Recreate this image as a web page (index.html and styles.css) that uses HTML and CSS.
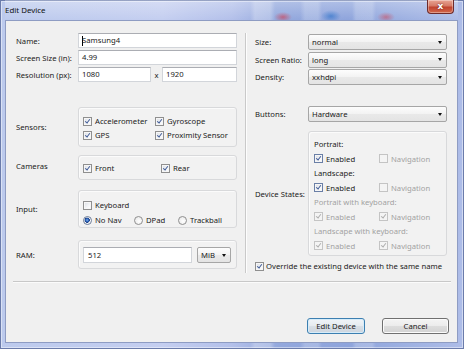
FILE: index.html
```html
<!DOCTYPE html>
<html>
<head>
<meta charset="utf-8">
<link rel="stylesheet" href="styles.css">
</head>
<body>
<div class="window">
  <div class="titlebar">
    <span class="title">Edit Device</span>
    <span class="close">x</span>
  </div>
  <div class="client">
    <div class="main">
      <div class="col-left">
        <div class="row">
          <span class="lbl">Name:</span>
          <div class="input fill"><span class="caret"></span>Samsung4</div>
        </div>
        <div class="row">
          <span class="lbl">Screen Size (in):</span>
          <div class="input fill">4.99</div>
        </div>
        <div class="row">
          <span class="lbl">Resolution (px):</span>
          <div class="input res1">1080</div>
          <span class="times">x</span>
          <div class="input fill">1920</div>
        </div>

        <div class="grow sensors-row">
          <span class="lbl">Sensors:</span>
          <div class="group sensors">
            <div class="cbline">
              <span class="item c72"><span class="cb on"></span>Accelerometer</span>
              <span class="item"><span class="cb on"></span>Gyroscope</span>
            </div>
            <div class="cbline">
              <span class="item c72"><span class="cb on"></span>GPS</span>
              <span class="item"><span class="cb on"></span>Proximity Sensor</span>
            </div>
          </div>
        </div>

        <div class="grow cameras-row">
          <span class="lbl up">Cameras</span>
          <div class="group cameras">
            <div class="cbline">
              <span class="item c78"><span class="cb on"></span>Front</span>
              <span class="item"><span class="cb on"></span>Rear</span>
            </div>
          </div>
        </div>

        <div class="grow input-row">
          <span class="lbl">Input:</span>
          <div class="group inputs">
            <div class="cbline">
              <span class="item"><span class="cb"></span>Keyboard</span>
            </div>
            <div class="cbline">
              <span class="item c51"><span class="rb on"></span>No Nav</span>
              <span class="item c44"><span class="rb"></span>DPad</span>
              <span class="item"><span class="rb"></span>Trackball</span>
            </div>
          </div>
        </div>

        <div class="grow ram-row">
          <span class="lbl">RAM:</span>
          <div class="group ram">
            <div class="input ramval">512</div>
            <div class="combo mib"><span>MiB</span><span class="arrow"></span></div>
          </div>
        </div>
      </div>

      <div class="vdivider"></div>

      <div class="col-right">
        <div class="rrow first">
          <span class="rlbl">Size:</span>
          <div class="combo fill"><span>normal</span><span class="arrow"></span></div>
        </div>
        <div class="rrow">
          <span class="rlbl">Screen Ratio:</span>
          <div class="combo fill"><span>long</span><span class="arrow"></span></div>
        </div>
        <div class="rrow">
          <span class="rlbl">Density:</span>
          <div class="combo fill"><span>xxhdpi</span><span class="arrow"></span></div>
        </div>
        <div class="rrow buttons-row">
          <span class="rlbl">Buttons:</span>
          <div class="combo fill"><span>Hardware</span><span class="arrow"></span></div>
        </div>

        <div class="states-row">
          <span class="rlbl">Device States:</span>
          <div class="group states">
            <div class="slabel">Portrait:</div>
            <div class="sline">
              <span class="item c65"><span class="cb on focus"></span>Enabled</span>
              <span class="item dis"><span class="cb dis"></span>Navigation</span>
            </div>
            <div class="slabel">Landscape:</div>
            <div class="sline">
              <span class="item c65"><span class="cb on focus"></span>Enabled</span>
              <span class="item dis"><span class="cb dis"></span>Navigation</span>
            </div>
            <div class="slabel dis">Portrait with keyboard:</div>
            <div class="sline">
              <span class="item c65 dis"><span class="cb dis on"></span>Enabled</span>
              <span class="item dis"><span class="cb dis on"></span>Navigation</span>
            </div>
            <div class="slabel dis">Landscape with keyboard:</div>
            <div class="sline">
              <span class="item c65 dis"><span class="cb dis on"></span>Enabled</span>
              <span class="item dis"><span class="cb dis on"></span>Navigation</span>
            </div>
          </div>
        </div>

        <div class="override">
          <span class="item"><span class="cb on"></span>Override the existing device with the same name</span>
        </div>
      </div>
    </div>

    <div class="separator"></div>

    <div class="actions">
      <button class="btn default">Edit Device</button>
      <button class="btn cancel">Cancel</button>
    </div>
  </div>
</div>
</body>
</html>
```

FILE: styles.css
```css
html, body {
  margin: 0;
  padding: 0;
}
body {
  width: 464px;
  height: 349px;
  overflow: hidden;
  font-family: "Noto Sans", "Open Sans", sans-serif;
  font-size: 7.7px;
  color: #1b1b1b;
}

.window {
  width: 464px;
  height: 349px;
  box-sizing: border-box;
  padding: 0 6px 6px 5px;
  display: flex;
  flex-direction: column;
  background:
    radial-gradient(ellipse 9px 5px at 283px 17px, rgba(196, 70, 96, 0.75), rgba(196, 70, 96, 0) 100%),
    radial-gradient(ellipse 10px 6px at 331px 16px, rgba(40, 110, 200, 0.7), rgba(40, 110, 200, 0) 100%),
    radial-gradient(ellipse 9px 5px at 386px 17px, rgba(200, 70, 90, 0.6), rgba(200, 70, 90, 0) 100%),
    linear-gradient(90deg, rgba(255,255,255,0) 0, rgba(255,255,255,0) 250px, rgba(255,255,255,0.25) 255px, rgba(255,255,255,0.25) 270px, rgba(255,255,255,0) 275px, rgba(255,255,255,0) 300px, rgba(255,255,255,0.2) 305px, rgba(255,255,255,0.2) 318px, rgba(255,255,255,0) 322px, rgba(255,255,255,0) 352px, rgba(255,255,255,0.2) 356px, rgba(255,255,255,0.2) 372px, rgba(255,255,255,0) 376px),
    linear-gradient(90deg, #bccaed 0%, #c4cef0 35%, #b3c0ea 50%, #93a8dd 60%, #8ea4dc 75%, #9eb1e2 88%, #aebde8 100%);
  box-shadow: inset 0 0 0 1px #6b7cab, inset 0 0 0 2px rgba(255,255,255,0.45);
}

.titlebar {
  height: 20px;
  flex: none;
  display: flex;
  align-items: flex-start;
  justify-content: space-between;
  background: linear-gradient(rgba(255,255,255,0.3), rgba(255,255,255,0));
}
.title {
  margin-top: 5px;
  font-size: 7.9px;
  line-height: 10px;
  color: #111;
}
.close {
  width: 27px;
  height: 14px;
  margin-right: 4px;
  box-sizing: border-box;
  border: 1px solid #6e2a2a;
  border-top: none;
  border-radius: 0 0 4px 4px;
  background: linear-gradient(#e8a493 0%, #d67a66 45%, #c0432e 55%, #d2674c 100%);
  color: #fff;
  font-family: "DejaVu Sans", sans-serif;
  font-weight: bold;
  font-size: 9px;
  line-height: 12px;
  text-align: center;
  text-shadow: 0 0 2px #5a1a10;
  box-shadow: inset 0 0 0 1px rgba(255,255,255,0.35);
}

.client {
  flex: 1;
  background: #f0f0f0;
  border: 1px solid #8e9cc3;
  display: flex;
  flex-direction: column;
}

.main {
  display: flex;
  padding: 12px 10px 0 10px;
}

.col-left {
  width: 221px;
  display: flex;
  flex-direction: column;
}
.vdivider {
  width: 1px;
  height: 240px;
  margin: 0 9px 0 8px;
  background: #c9c9c9;
  box-shadow: 1px 0 0 #fdfdfd;
}
.col-right {
  width: 192px;
  display: flex;
  flex-direction: column;
}

.row {
  display: flex;
  align-items: center;
  height: 15px;
  margin-bottom: 2px;
}
.lbl {
  width: 62px;
  flex: none;
  white-space: nowrap;
}
.lbl.up {
  margin-top: -3px;
}
.input {
  height: 15px;
  box-sizing: border-box;
  background: #fff;
  border: 1px solid #d2d5da;
  border-top-color: #abadb3;
  padding-left: 3px;
  line-height: 13px;
  display: flex;
  align-items: center;
  white-space: nowrap;
}
.fill {
  flex: 1;
}
.res1 {
  width: 73px;
}
.times {
  width: 11px;
  text-align: center;
  flex: none;
}
.caret {
  display: inline-block;
  width: 0;
  height: 10px;
  border-left: 1px solid #000;
  margin-right: -1px;
}

.grow {
  display: flex;
  align-items: center;
}
.group {
  flex: 1;
  box-sizing: border-box;
  border: 1px solid #d8d9db;
  border-radius: 3px;
  background: #f2f2f2;
  box-shadow: inset 1px 1px 0 #fbfbfb;
  padding-left: 4px;
}
.sensors-row { margin-top: 23px; }
.sensors {
  height: 40px;
  padding-top: 6px;
}
.cameras-row { margin-top: 8px; }
.cameras {
  height: 25px;
  padding-top: 5px;
}
.input-row { margin-top: 10px; }
.inputs {
  height: 38px;
  padding-top: 7px;
}
.inputs .cbline + .cbline { margin-top: 1px; }
.ram-row { margin-top: 12px; }
.ram {
  height: 29px;
  display: flex;
  align-items: center;
  padding-top: 1px;
}
.ramval {
  width: 109px;
  height: 16px;
  padding-left: 4px;
}
.mib {
  width: 34px;
  height: 17px;
  margin-left: 5px;
  background: linear-gradient(#f6f6f6 0%, #ebebeb 48%, #dcdcdc 52%, #d3d3d3 100%);
  border-color: #8a8a8a;
  padding-left: 4px;
}

.cbline {
  height: 14px;
  display: flex;
  align-items: center;
}
.item {
  display: flex;
  align-items: center;
  white-space: nowrap;
}
.c72 { width: 72px; }
.c78 { width: 78px; }
.c51 { width: 51px; }
.c44 { width: 44px; }
.c65 { width: 65px; }

.cb {
  display: inline-block;
  width: 9px;
  height: 9px;
  box-sizing: border-box;
  border: 1px solid #8f8f8f;
  background: linear-gradient(135deg, #d7dbe2 0%, #f4f5f7 60%, #ffffff 100%);
  box-shadow: inset 0 0 0 1px #f6f6f6;
  position: relative;
  margin-right: 3px;
  flex: none;
}
.cb.on::after {
  content: "";
  position: absolute;
  left: 2.3px;
  top: 0.3px;
  width: 1.6px;
  height: 4.2px;
  border: solid #3e5a96;
  border-width: 0 1.4px 1.4px 0;
  transform: rotate(38deg);
}
.cb.focus {
  border-color: #6a7fa6;
}
.cb.dis {
  border-color: #c4c4c4;
  background: #f4f4f4;
  box-shadow: none;
}
.cb.dis.on::after {
  border-color: #adadad;
}
.rb {
  display: inline-block;
  width: 9px;
  height: 9px;
  box-sizing: border-box;
  border-radius: 50%;
  border: 1px solid #8f8f8f;
  background: radial-gradient(circle at 60% 60%, #ffffff 0, #e4e4e4 100%);
  margin-right: 3px;
  flex: none;
}
.rb.on {
  border-color: #6c7c98;
  background: radial-gradient(circle at 45% 45%, #7fb2ee 0, #2a5fb4 1.6px, #1c3f86 2.4px, #f2f2f2 2.8px, #ffffff 4px);
}
.dis {
  color: #a2a2a2;
}

.rrow {
  display: flex;
  align-items: center;
  height: 16px;
  margin-bottom: 1.5px;
}
.rrow.first {
  margin-top: 1px;
}
.rlbl {
  width: 53px;
  flex: none;
  white-space: nowrap;
}
.combo {
  height: 16px;
  box-sizing: border-box;
  border: 1px solid #a6a6a6;
  border-radius: 2px;
  background: linear-gradient(#fdfdfd 0%, #f3f3f3 48%, #e9e9e9 52%, #e4e4e4 100%);
  display: flex;
  align-items: center;
  justify-content: space-between;
  padding-left: 3px;
  padding-right: 4px;
  white-space: nowrap;
}
.arrow {
  width: 0;
  height: 0;
  border-left: 2.5px solid transparent;
  border-right: 2.5px solid transparent;
  border-top: 3px solid #111;
}
.buttons-row {
  margin-top: 19.5px;
}
.states-row {
  display: flex;
  align-items: center;
  margin-top: 7.5px;
}
.states {
  height: 125px;
  padding-top: 5px;
  padding-left: 5px;
}
.slabel {
  height: 14px;
  line-height: 14px;
  white-space: nowrap;
}
.sline {
  height: 15px;
  display: flex;
  align-items: center;
}
.override {
  margin-top: 4px;
  height: 12px;
  display: flex;
  align-items: center;
}
.override .cb {
  margin-right: 2px;
}

.separator {
  height: 1px;
  margin: 8px 6px 0 7px;
  background: #c8c8c8;
  box-shadow: 0 1px 0 #fbfbfb;
}

.actions {
  display: flex;
  justify-content: flex-end;
  padding-right: 8px;
  margin-top: 36px;
}
.btn {
  height: 16px;
  box-sizing: border-box;
  padding: 0;
  font-family: "Noto Sans", "Open Sans", sans-serif;
  font-size: 7.7px;
  color: #1b1b1b;
  border: 1px solid #707070;
  border-radius: 3px;
  background: linear-gradient(#f4f4f4 0%, #ececec 48%, #dddddd 52%, #d2d2d2 100%);
  box-shadow: inset 0 0 0 1px #fbfbfb;
}
.btn.default {
  width: 58px;
  border-color: #3c7fb1;
  background: linear-gradient(#f0f4f8 0%, #e6ebf0 48%, #d8dfe6 52%, #cdd5de 100%);
  box-shadow: inset 0 0 0 1px #d6ecf9;
}
.btn.cancel {
  width: 67px;
  margin-left: 17px;
}
```
